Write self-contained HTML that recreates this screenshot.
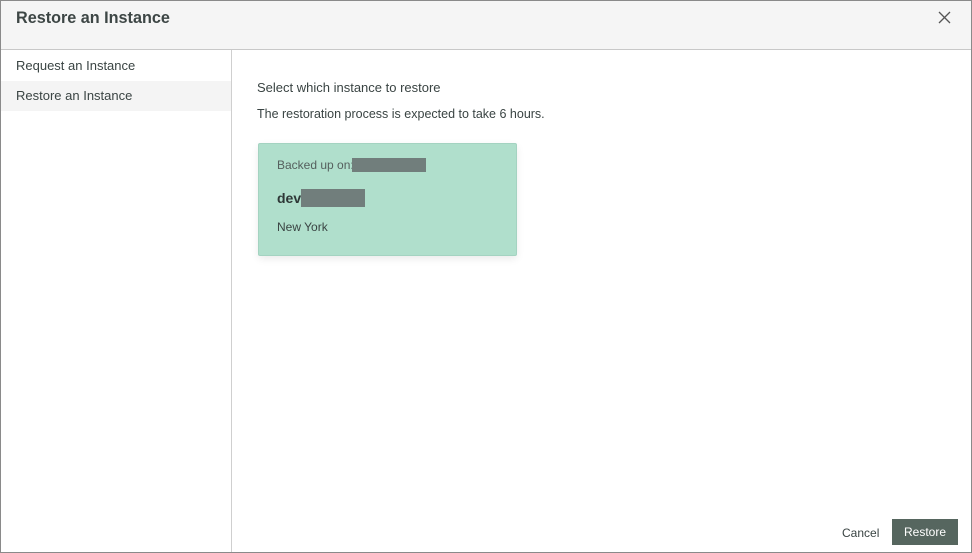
<!DOCTYPE html>
<html><head><style>
body{margin:0;width:972px;height:553px;font-family:"Liberation Sans",sans-serif;color:#3a4443;overflow:hidden}
.frame{position:absolute;left:0;top:0;width:970px;height:551px;border:1px solid #8a8a8a;background:#fff}
.hdr{position:absolute;left:0;top:0;width:970px;height:48px;background:#f5f5f5;border-bottom:1px solid #c8c8c8}
.hdr h1{margin:0;position:absolute;left:15px;top:8px;font-size:16.2px;font-weight:bold;color:#3d4645}
.side{position:absolute;left:0;top:49px;width:230px;height:502px;border-right:1px solid #cfcfcf}
.it{position:absolute;left:0;width:230px;height:30px;line-height:30px;padding-left:15px;box-sizing:border-box;font-size:13px}
.card{position:absolute;left:257px;top:142px;width:257px;height:111px;background:#b0dfcc;border:1px solid #a4d3c1;border-radius:2px;box-shadow:0 3px 8px rgba(0,0,0,.08)}
.red{position:absolute;background:#717e7c}
</style></head><body>
<div class="frame">
<div class="hdr"><h1>Restore an Instance</h1>
<svg style="position:absolute;left:937px;top:10px" width="13" height="13"><path d="M1 1L12 12M12 1L1 12" stroke="#555" stroke-width="1.3"/></svg></div>
<div class="side">
<div class="it" style="top:1px">Request an Instance</div>
<div class="it" style="top:31px;background:#f4f4f4">Restore an Instance</div>
</div>
<div style="position:absolute;left:256px;top:79px;font-size:13px">Select which instance to restore</div>
<div style="position:absolute;left:256px;top:106px;font-size:12.5px">The restoration process is expected to take 6 hours.</div>
<div class="card">
<div style="position:absolute;left:18px;top:14px;font-size:12px;color:#55605e">Backed up on:</div>
<div class="red" style="left:93px;top:14px;width:74px;height:14px"></div>
<div style="position:absolute;left:18px;top:46px;font-size:14px;font-weight:bold;color:#2e3837">dev</div>
<div class="red" style="left:42px;top:45px;width:64px;height:18px"></div>
<div style="position:absolute;left:18px;top:76px;font-size:12px">New York</div>
</div>
<div style="position:absolute;left:841px;top:525px;font-size:12px">Cancel</div>
<div style="position:absolute;left:891px;top:518px;width:66px;height:26px;background:#56665f;color:#fff;font-size:12px;line-height:26px;text-align:center">Restore</div>
</div>
</body></html>
